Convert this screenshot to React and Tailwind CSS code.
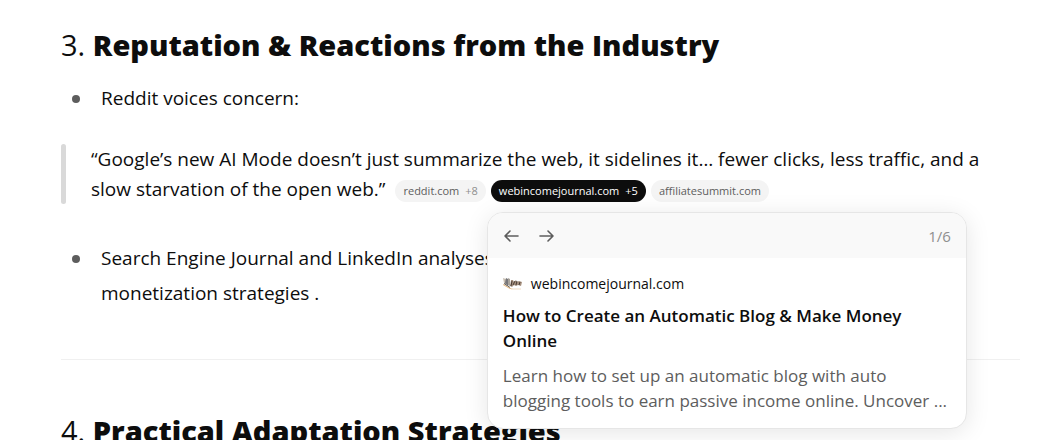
function SectionHeading({ number, children }) {
  return (
    <h2 className="text-[29px] leading-10 font-normal">
      {number}. <strong className="font-extrabold">{children}</strong>
    </h2>
  );
}

function Bullet({ children }) {
  return (
    <li className="flex gap-[21px] pl-[11px]">
      <span className="mt-3.5 size-2 shrink-0 rounded-full bg-[#5d5d5d]" />
      <p className="text-[19px] leading-[35px]">{children}</p>
    </li>
  );
}

function SourcePill({ site, extra, active }) {
  return (
    <a
      href="#sources"
      className={
        active
          ? 'flex h-[22px] items-center gap-1.5 rounded-full bg-[#0d0d0d] px-2 text-[11px] text-white'
          : 'flex h-[22px] items-center gap-1.5 rounded-full bg-[#f4f4f4] px-2 text-[11px] text-[#5d5d5d]'
      }
    >
      {site}
      {extra && <span className={active ? 'text-white' : 'text-[#8f8f8f]'}>{extra}</span>}
    </a>
  );
}

function Arrow({ d }) {
  return (
    <svg
      className="h-4 w-4"
      viewBox="0 0 16 16"
      fill="none"
      stroke="currentColor"
      strokeWidth="1.6"
      strokeLinecap="round"
      strokeLinejoin="round"
      aria-hidden="true"
    >
      <path d={d} />
    </svg>
  );
}

function Favicon() {
  return (
    <svg className="h-5 w-5 shrink-0" viewBox="0 0 20 20" aria-hidden="true">
      <path d="M0 4l3 1v6l-2-2z" fill="#c9bfb2" />
      <path d="M3 4l2 1v7l-3-3z" fill="#77777a" />
      <path d="M5 4l2 1v7l-2-1z" fill="#a9a39b" />
      <path d="M1 9l6 4v1l-6-4z" fill="#55504c" />
      <path d="M0 11l7 4h3l-3-1-7-4z" fill="#e3b57a" />
      <path d="M7 12l1-6h2l1 2 2-2 1 2 2-1 3 1-1 4-3-1-2 1-2-1-2 2z" fill="#a58f7d" />
      <path d="M8 12l1-5M10 11l2-4M13 11l1-4M16 11l1-3" stroke="#4a3d34" strokeWidth="1" />
      <path d="M8 15h10" stroke="#f1ddc5" strokeWidth="1" />
    </svg>
  );
}

function SourceCard() {
  return (
    <div className="absolute top-full -left-1 z-10 mt-2.5 w-[480px] overflow-hidden rounded-2xl border border-[#e6e6e6] bg-white shadow-[0_4px_24px_rgba(0,0,0,0.1)]">
      <div className="flex h-[45px] items-center justify-between bg-[#f9f9f9] px-[15px] pt-0.5">
        <div className="flex gap-[19px] text-[#5d5d5d]">
          <button type="button" aria-label="Previous source">
            <Arrow d="M15 8H2M7 3L2 8l5 5" />
          </button>
          <button type="button" aria-label="Next source">
            <Arrow d="M2 8h13M10 3l5 5-5 5" />
          </button>
        </div>
        <span className="text-[15px] text-[#8f8f8f]">1/6</span>
      </div>
      <div className="px-[15px] pt-3.5 pb-[15px]">
        <div className="flex items-center gap-2 text-[14px] leading-6">
          <Favicon />
          webincomejournal.com
        </div>
        <h3 className="mt-[7px] text-[17px] leading-[25px] font-semibold">
          How to Create an Automatic Blog &amp; Make Money Online
        </h3>
        <p className="mt-2.5 text-[17px] leading-[25px] text-[#5d5d5d]">
          Learn how to set up an automatic blog with auto blogging tools to earn passive income
          online. Uncover ...
        </p>
      </div>
    </div>
  );
}

export default function App() {
  return (
    <main className="h-screen overflow-hidden bg-white pt-[25px] pr-[34px] pl-[61px] font-['Open_Sans',sans-serif] text-[#0d0d0d]">
      <SectionHeading number={3}>Reputation &amp; Reactions from the Industry</SectionHeading>

      <ul className="mt-4">
        <Bullet>Reddit voices concern:</Bullet>
      </ul>

      <blockquote className="mt-7 flex gap-[25px] text-[19px] leading-[30px]">
        <span className="w-[5px] shrink-0 rounded-full bg-[#d9d9d9]" />
        <div>
          “Google’s new AI Mode doesn’t just summarize the web, it sidelines it… fewer clicks, less
          traffic, and a slow starvation of the open web.”
          <span className="ml-2.5 inline-flex gap-[5px] align-middle">
            <SourcePill site="reddit.com" extra="+8" />
            <span className="relative">
              <SourcePill site="webincomejournal.com" extra="+5" active />
              <SourceCard />
            </span>
            <SourcePill site="affiliatesummit.com" />
          </span>
        </div>
      </blockquote>

      <ul className="mt-[37px]">
        <Bullet>
          Search Engine Journal and LinkedIn analyses
          <br />
          monetization strategies .
        </Bullet>
      </ul>

      <hr className="mt-12 border-[#f0f0f0]" />

      <div className="mt-[51px]">
        <SectionHeading number={4}>Practical Adaptation Strategies</SectionHeading>
      </div>
    </main>
  );
}
